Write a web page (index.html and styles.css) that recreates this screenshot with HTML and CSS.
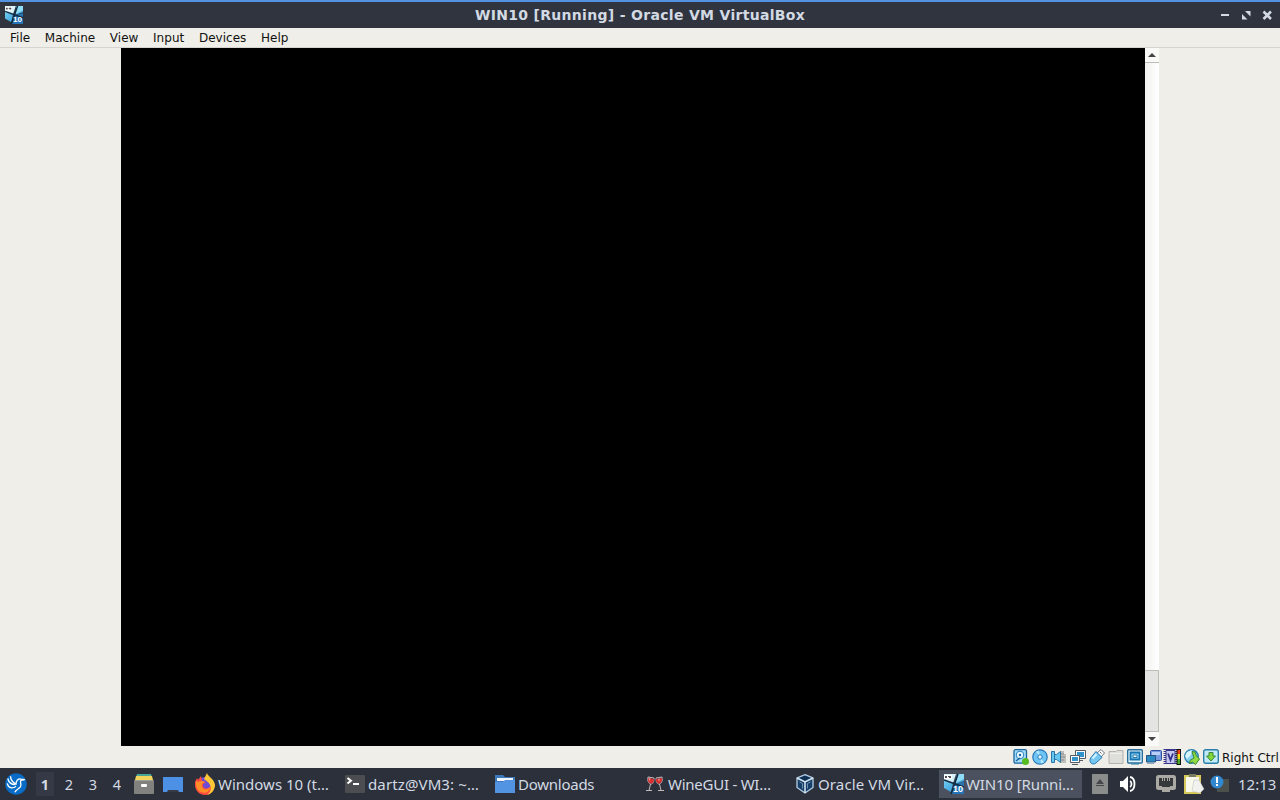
FILE: index.html
```html
<!DOCTYPE html>
<html lang="en">
<head>
  <meta charset="UTF-8">
  <title>WIN10 [Running] - Oracle VM VirtualBox</title>
  <link rel="stylesheet" href="styles.css">
</head>
<body>
  <!-- shared icon -->
  <svg class="defs">
    <linearGradient id="sky" x2="1" y2="1"><stop stop-color="#8adcfb"/><stop offset="1" stop-color="#168ad0"/></linearGradient>
    <symbol id="win10" viewBox="0 0 20 20">
      <path fill="#d8f2fb" d="M0 0h12L9 9H0z"/>
      <path fill="url(#sky)" d="M13 0h7v7l-9 3zM0 7l9 2-2 9-7-4z"/>
      <path fill="#8fdcf6" d="M13 0h7v5l-8 4z"/>
      <path fill="#2575b8" d="M11 10l9-2v12H8z"/>
      <path stroke="#102c42" stroke-width="1.6" d="M14 0L7 20M0 6l20 7" fill="none"/>
      <path fill="#fff" d="M0 1h8v4H0z"/>
      <path fill="#4d4d58" d="M1 2h2v2H1zM4 2h3v1H4zM5 3h2v1H5z"/>
      <text class="ten" x="9" y="18">10</text>
    </symbol>
  </svg>

  <header class="titlebar">
    <svg class="app-icon" width="18" height="18"><use href="#win10"/></svg>
    <h1>WIN10 [Running] - Oracle VM VirtualBox</h1>
    <div class="window-buttons">
      <svg width="11" height="11"><path stroke="#d3dae3" stroke-width="2" d="M1 5h8"/></svg>
      <svg width="11" height="11"><path fill="#d3dae3" d="M4 1h5.500v5.500zM1 4l5.500 5.500H1z"/></svg>
      <svg width="11" height="11"><path stroke="#d3dae3" stroke-width="2.600" d="M1.500 1.500l7.500 7.500M9 1.500L1.500 9"/></svg>
    </div>
  </header>

  <nav class="menubar">
    <span>File</span><span>Machine</span><span>View</span><span>Input</span><span>Devices</span><span>Help</span>
  </nav>

  <main class="viewport">
    <div class="screen"></div>
    <div class="scrollbar">
      <div class="arrow"><svg width="8" height="4"><path fill="#444" d="M0 4l4-4 4 4z"/></svg></div>
      <div class="thumb"></div>
      <div class="track"></div>
      <div class="arrow"><svg width="8" height="4"><path fill="#444" d="M0 0h8L4 4z"/></svg></div>
    </div>
  </main>

  <footer class="statusbar">
    <!-- hard disk -->
    <svg viewBox="0 0 16 16"><rect x="1" y=".7" width="12.500" height="13.500" rx="1.500" fill="#a6dcfa" stroke="#17649f" stroke-width="1.300"/><circle cx="7" cy="6" r="3.800" fill="#e8f8ff" stroke="#2580bd"/><circle cx="7" cy="6" r="1.200" fill="#17649f"/><path stroke="#17649f" stroke-width="1.500" d="M3 12l4-3"/><circle cx="12.500" cy="12.500" r="3.500" fill="#56bb20"/></svg>
    <!-- optical drive -->
    <svg viewBox="0 0 16 16"><circle cx="8" cy="8" r="7.200" fill="#6fc5f3" stroke="#2779bb" stroke-width="1.200"/><path fill="#b7e8ff" d="M8 8L4 2.500 7 1.500zM8 8l4 5.500-3 1z"/><circle cx="8" cy="8" r="2.200" fill="#e3f7ff" stroke="#2779bb"/></svg>
    <!-- audio -->
    <svg viewBox="0 0 16 16"><path fill="#bdbdb9" d="M9 2h4v3h2v9H9z"/><path stroke="#898a89" d="M10 5h3M10 8h4M10 11h3"/><path fill="#68c7ee" stroke="#2876a7" d="M.5 2.500h3v11h-3zM3.500 5.500h2l4-3v11l-4-3h-2z"/></svg>
    <!-- network -->
    <svg viewBox="0 0 16 16"><path fill="#fff" stroke="#555b62" d="M5.500 1.500h10v8h-10zM8 11.500h5"/><path fill="#3093cc" d="M7 3h7v5H7z"/><path fill="#fff" stroke="#555b62" d="M.5 6.500h9v7h-9zM2 15.500h6"/><path fill="#3093cc" d="M2 8h6v4H2z"/></svg>
    <!-- usb -->
    <svg viewBox="0 0 16 16"><path fill="#fff" stroke="#68747e" d="M8 4l4-3.500L15.500 4 12 8z"/><path fill="#75c7f1" stroke="#2879b6" d="M7 2.500l6 6-6 5.500c-4 3-8-1.500-5-5.500z"/><path stroke="#d4f3ff" stroke-width="2" d="M3.500 9.500L7.500 5"/><path stroke="#63717a" d="M11 3l1.500 1.500"/></svg>
    <!-- shared folders -->
    <svg viewBox="0 0 16 16"><path fill="#dededb" stroke="#b4b3ac" d="M1 2.500h7l1-1h6v13H1z"/><path stroke="#efefed" d="M2 4.500h12"/></svg>
    <!-- display -->
    <svg viewBox="0 0 16 16"><rect x=".7" y=".7" width="14.600" height="13.300" rx="1" fill="#e4f7ff" stroke="#286d99" stroke-width="1.400"/><path fill="#8cd1f2" stroke="#1774b3" stroke-width="1.800" d="M3.500 3.500h9v7h-9z"/><path fill="#fff" stroke="#2878a8" d="M6 6h4v2.500H6zM4 15h8"/></svg>
    <!-- recording -->
    <svg viewBox="0 0 16 16"><rect x="4.500" y="1.500" width="11" height="10" rx="1" fill="#769be0" stroke="#304f9e"/><path fill="#b9cff7" d="M6 3h8v3H6z"/><path fill="#2a8bc3" stroke="#285280" d="M.5 6.500h9v6.500h-9z"/><path stroke="#8baac2" d="M1 14.500h7"/></svg>
    <!-- cpu load -->
    <svg viewBox="0 0 16 16"><path stroke="#39358a" stroke-width="14" stroke-dasharray="1 1" d="M5.500 0v16" fill="none" /><path fill="#c4c7ee" stroke="#39358a" d="M1 1.500h9v13H1z"/><path fill="none" stroke="#322f89" stroke-width="1.800" d="M3 4.500L5.500 11 8 4.500"/><path fill="#111" d="M11.500 0H16v16h-4.500z"/><path fill="#ef3d18" d="M12.500 1h2.500v4h-2.500z"/><path fill="#f5df19" d="M12.500 5h2.500v5h-2.500z"/><path fill="#49a927" d="M12.500 10h2.500v5h-2.500z"/></svg>
    <!-- mouse integration -->
    <svg viewBox="0 0 16 16"><circle cx="7.500" cy="7.500" r="6.800" fill="#83cdef" stroke="#247ead" stroke-width="1.300"/><path fill="#d8f4ff" d="M3 3l5-2-1 5-4 4-2-3z"/><path fill="#91da42" stroke="#358836" d="M8 2.500l3 .5 1.500 4 3 3-4 5.500-3-2.500-3 1.500.5-3 4-2.500z"/></svg>
    <!-- keyboard capture -->
    <svg viewBox="0 0 16 16"><rect x=".7" y=".7" width="14.600" height="13.600" rx="2" fill="#c1eaf8" stroke="#297fa8" stroke-width="1.400"/><path fill="#84d63b" stroke="#358836" d="M6 3.500h4v3.500h2.500L8 12 3.500 7H6z"/></svg>
    <span class="host-key">Right Ctrl</span>
  </footer>

  <div class="taskbar">
    <svg class="start" viewBox="0 0 20 20" width="22" height="22"><circle cx="10" cy="10" r="9.800" fill="#086bc5"/><path fill="none" stroke="#fff" stroke-width="1.200" d="M2.500 5c1 4 4 5.500 7 5.500M5 3c0 3 2 5.500 5 7 0-3 2-5 4.500-4.500L18 6l-3.500.7c-1.500.8 1 3-.5 6-1.500 2-4 2-5 4.800M2 9.500c1 4.500 5 5 8 2.500"/></svg>
    <div class="desktops">
      <span class="desktop current">1</span><span class="desktop">2</span><span class="desktop">3</span><span class="desktop">4</span>
    </div>
    <div class="launchers">
      <svg width="20" height="20"><path fill="#4ba596" d="M3 0h14l1 3H2z"/><path fill="#f1d35b" d="M2 2h16l1 4H1z"/><rect y="6" width="20" height="14" rx="1" fill="#81817d"/><path fill="#a0a09b" d="M1 6h18v1H1z"/><rect x="7" y="10" width="6" height="3" rx="1" fill="#fff"/></svg>
      <svg width="20" height="20"><path fill="#4c91e5" d="M0 3h20v15H0z"/><path fill="#343b46" d="M4 18l1-2h10l1 2z"/></svg>
    </div>

    <div class="tasks">
      <div class="task">
        <svg viewBox="0 0 22 22"><circle cx="11" cy="12" r="8" fill="#704bd3"/><path fill="#ff4b40" d="M1 9l2-4 1 2 3-4 1 5 4 1-3 2c-1 5 5 6 8 2l2-5 2 4c-1 6-5 10-10 10S1 18 1 12z"/><path fill="#ffc735" d="M13 0c1 4 7 5 8 12 0 4-3 9-8 10 5-4 4-8 3-10-1-3-4-4-6-6z"/><path fill="#ff8e26" d="M2 8l2 1 4-1 3 1-3 2c-1 6 5 7 8 3 0 5-5 7-9 5-3-1-5-4-5-8z"/></svg>
        <span>Windows 10 (t…</span>
      </div>
      <div class="task">
        <svg class="square" viewBox="0 0 20 20"><rect y="1" width="20" height="18" rx="1" fill="#4c4d50"/><path fill="none" stroke="#fff" stroke-width="2" d="M2.500 4L6 6.700 2.500 9.500M8 10h6"/></svg>
        <span class="wider">dartz@VM3: ~…</span>
      </div>
      <div class="task">
        <svg class="square" viewBox="0 0 20 20"><path fill="#3d78ba" d="M0 1h8l2 2h10v15H0z"/><path fill="#eff5fa" d="M2 4h16v3H2z"/><path fill="#5294e2" d="M0 8h8l2-2h10v13H0z"/></svg>
        <span class="tighter">Downloads</span>
      </div>
      <div class="task">
        <svg class="square" viewBox="0 0 20 20"><g fill="none" stroke="#c4b8b9"><path d="M3 3l6 1c0 4-1 6-3 6S2 7 3 3zM5.500 10L4 16.500M1 16.500h6M17 3l-6 1c0 4 1 6 3 6s4-3 3-7zM14.500 10l1.500 6.500M13 16.500h6"/></g><path fill="#d92f32" d="M3 4l6 1c0 3-1 4.500-3 4.500S2.500 7 3 4zM17 4l-6 1c0 3 1 4.500 3 4.500S17.500 7 17 4z"/><path fill="#ee9993" d="M3.500 4l2 .3-1 3zM13 5l2-.5-1 3z"/></svg>
        <span class="tighter">WineGUI - WI…</span>
      </div>
      <div class="task">
        <svg class="square" viewBox="0 0 20 20"><path fill="#173e69" stroke="#b5d0e5" stroke-width="1.300" d="M10 .7L18 4v9.500L10 19l-8-5.500V4z"/><path fill="#204e7b" stroke="#d9e7f1" stroke-width="1.500" d="M2 4l8 4 8-4M10 8v11"/><path fill="#102e50" d="M5 4l5-2 5 2-5 2.500z"/><path stroke="#6c8fae" d="M4.500 8l3 1.500v5M15.500 8l-3 1.500v5" fill="none"/></svg>
        <span class="wider">Oracle VM Vir…</span>
      </div>
      <div class="task active">
        <svg class="square"><use href="#win10"/></svg>
        <span class="tighter">WIN10 [Runni…</span>
      </div>
    </div>

    <div class="tray">
      <svg class="eject" width="16" height="20"><path fill="#8b8c8c" d="M0 0h16v20H0z"/><path fill="#45484b" d="M4 10l4-5 4 5zM4 11h8v1H4z"/></svg>
      <svg class="volume" width="18" height="18"><path fill="#fff" d="M0 6h3l5-5v16l-5-5H0z"/><path fill="none" stroke="#fff" stroke-width="1.800" d="M10 6c2 1 2 5 0 6M10 2c6 1 6 13 0 14"/></svg>
      <svg class="wired" width="20" height="18"><rect x="1.500" y="1.500" width="17" height="12" rx="1" fill="#34383b" stroke="#aaa9a3" stroke-width="3"/><path stroke="#aaa9a3" d="M6.500 3v3M8.500 3v3M11.500 3v3M13.500 3v3"/><path fill="#aaa9a3" d="M3 11h3v2h8v-2h3v4h-3v2H6v-2H3z"/></svg>
      <svg class="clipboard" width="20" height="22"><path fill="#d6c85b" d="M0 2h17v19H0z"/><path fill="#f9f9eb" d="M2 4h13v15H2z"/><path fill="#777b62" d="M5 1h7v3H5z"/><path fill="#f1f1ef" stroke="#bbb" stroke-width=".5" d="M10 7h5l5 9-4 4-8-2z"/></svg>
      <svg class="update" width="20" height="18"><path fill="#4c504b" d="M7 4h12v13H7z"/><circle cx="7" cy="7" r="6.500" fill="#3288cf"/><path stroke="#fff" stroke-width="2" d="M7 2v6M7 9v2"/></svg>
      <time>12:13</time>
    </div>
  </div>
</body>
</html>
```
FILE: styles.css
```css
* { box-sizing: border-box; }
body {
  margin: 0;
  width: 1280px;
  height: 800px;
  overflow: hidden;
  display: grid;
  grid-template-rows: 28px 20px 698px 22px 32px;
  background: #efeee8;
  color: #111;
  font: 12px "DejaVu Sans", sans-serif;
}
svg { display: block; flex: none; overflow: visible; }
.defs { position: absolute; width: 0; height: 0; }
#win10 { overflow: visible; }
.ten { font: bold 9px "Liberation Sans", sans-serif; fill: #fff; }

.titlebar {
  display: grid;
  grid-template-columns: 60px 1fr 60px;
  align-items: center;
  border-top: 2px solid #5294e2;
  background: #2f343f;
  color: #d3dae3;
}
.app-icon { margin-left: 5px; }
.titlebar h1 {
  margin: 0;
  text-align: center;
  font-size: 14px;
  letter-spacing: 0.31px;
  line-height: 26px;
  white-space: nowrap;
}
.window-buttons { display: flex; gap: 10px; }

.menubar {
  display: flex;
  gap: 14.6px;
  padding-left: 10px;
  line-height: 20px;
  letter-spacing: 0.03px;
  border-bottom: 1px solid #d5d4d0;
}

.viewport { display: flex; padding-left: 121px; }
.screen { width: 1024px; background: #000; }
.scrollbar {
  width: 14px;
  display: grid;
  grid-template-rows: 14px 608px 62px 14px;
  background: #f9f9f8;
}
.arrow { display: grid; place-items: center; }
.thumb { border-top: 1px solid #bcbcb8; background: linear-gradient(90deg, #f1f1f0, #fff); }
.track { border: 1px solid #bcbcb8; border-left: 0; background: #e4e4e3; }

.statusbar {
  display: flex;
  justify-content: flex-end;
  align-items: center;
  gap: 3px;
  padding-right: 1px;
}
.statusbar svg { width: 16px; height: 16px; }
.host-key { width: 57px; padding-top: 2px; white-space: nowrap; }

.taskbar {
  display: flex;
  align-items: center;
  background: #2b303b;
  color: #d3dae3;
  font: 15px "Noto Sans", sans-serif;
}
.start { margin-left: 5px; }
.desktops { display: flex; margin-left: 9px; }
.desktop {
  width: 18px;
  height: 24px;
  margin-right: 6px;
  line-height: 25px;
  text-align: center;
  font-size: 14.5px;
}
.current { background: #343945; font-weight: bold; }
.launchers { display: flex; gap: 9px; margin-left: 2px; }
.tasks { display: flex; margin-left: 7px; }
.task {
  width: 150px;
  height: 28px;
  display: flex;
  align-items: center;
  gap: 3px;
  padding-left: 5px;
  white-space: nowrap;
}
.task svg { width: 22px; height: 22px; margin-left: -1px; margin-right: -1px; }
.task .square { width: 20px; height: 20px; margin: 0; }
.tighter { letter-spacing: -0.25px; }
.wider { letter-spacing: 0.12px; }
.active { width: 143px; margin-left: -1px; background: #4b515e; }
.active .tighter { margin-left: -1px; letter-spacing: -0.12px; }

.tray { display: flex; align-items: center; margin-left: 10px; }
.volume { margin-left: 12px; }
.wired { margin-left: 18px; }
.clipboard { margin-left: 8px; }
.update { margin-left: 6px; }
.tray time { margin-left: 8px; }
```
